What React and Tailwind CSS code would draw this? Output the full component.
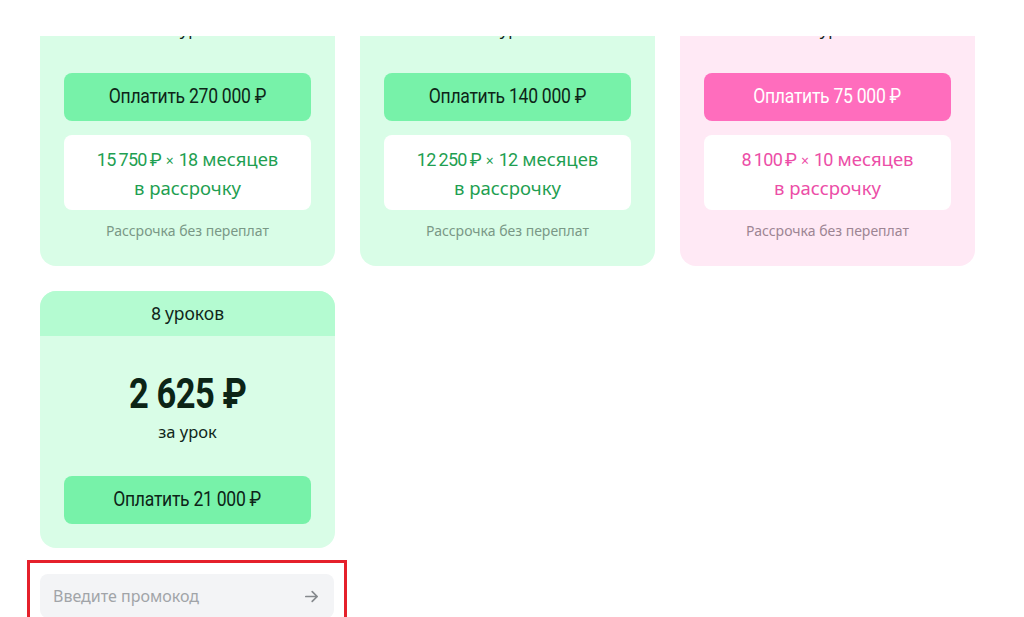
import React from "react";

const cond = { fontFamily: 'Roboto, "Liberation Sans", sans-serif' };

function N({ children }) {
  return <span className="text-[18px] tracking-[-0.7px]" style={cond}>{children}</span>;
}

function Pay({ children, white }) {
  return (
    <span className={`inline-block scale-x-[0.9] text-[19.5px] font-normal tracking-[-0.3px] ${white ? "text-white" : "text-[#0d2417]"}`} style={cond}>
      {children}
    </span>
  );
}

function Price({ children }) {
  return (
    <div className="pt-[36px] h-[80px] flex justify-center">
      <span className="inline-block scale-x-[0.82] text-[42px] leading-[44px] font-bold text-[#0c2416] tracking-[-0.5px]" style={cond}>{children}</span>
    </div>
  );
}

function TopCard({ pink, price, per, pay, a, b, c }) {
  const bg = pink ? "bg-[#ffe9f5]" : "bg-[#d9fde7]";
  const head = pink ? "bg-[#ffd3ea]" : "bg-[#b4fbd1]";
  const btn = pink ? "bg-[#ff6dbd]" : "bg-[#77f2a9]";
  const inst = pink ? "text-[#ec4ea7]" : "text-[#1f9f52]";
  const note = pink ? "text-[#9d8593]" : "text-[#7a9886]";
  return (
    <div className={`${bg} rounded-[16px] overflow-hidden flex flex-col`}>
      <div className={`${head} h-[45px] flex items-center justify-center text-[17.5px] text-[#10261a]`}>{per}</div>
      <div className="px-[24px] pb-[25px] flex flex-col items-center">
        <Price>{price}</Price>
        <div className="mt-[6px] text-[16.5px] leading-[20px] text-[#10261a]">за урок</div>
        <div className={`mt-[34px] w-full h-[48px] rounded-[8px] ${btn} flex items-center justify-center`}>
          <Pay white={pink}>{pay}</Pay>
        </div>
        <div className={`mt-[14px] w-full h-[75px] rounded-[8px] bg-white flex flex-col items-center justify-center text-[18.5px] leading-[27px] ${inst}`}>
          <div><N>{a}</N> <span className="text-[14px]">×</span> <N>{b}</N> {c}</div>
          <div>в рассрочку</div>
        </div>
        <div className={`mt-[11px] text-[14px] leading-[20px] ${note}`}>Рассрочка без переплат</div>
      </div>
    </div>
  );
}

function SmallCard() {
  return (
    <div className="bg-[#d9fde7] rounded-[16px] overflow-hidden flex flex-col self-start">
      <div className="bg-[#b4fbd1] h-[45px] flex items-center justify-center text-[17.5px] text-[#10261a]"><span><N>8</N> уроков</span></div>
      <div className="px-[24px] pb-[24px] flex flex-col items-center">
        <Price>2 625 ₽</Price>
        <div className="mt-[6px] text-[16.5px] leading-[20px] text-[#10261a]">за урок</div>
        <div className="mt-[34px] w-full h-[48px] rounded-[8px] bg-[#77f2a9] flex items-center justify-center">
          <Pay>Оплатить 21 000 ₽</Pay>
        </div>
      </div>
    </div>
  );
}

export default function App() {
  return (
    <div className="relative w-[1024px] h-[617px] overflow-hidden bg-white" style={{ fontFamily: '"Noto Sans", "Open Sans", sans-serif' }}>
      <div className="-mt-[112px]">
        <div className="grid grid-cols-[295px_295px_295px] gap-[25px] pl-[40px]">
          <TopCard price="3 750 ₽" per="72 урока" pay="Оплатить 270 000 ₽" a={"15\u2009750\u2009₽"} b="18" c="месяцев" />
          <TopCard price="3 890 ₽" per="36 уроков" pay="Оплатить 140 000 ₽" a={"12\u2009250\u2009₽"} b="12" c="месяцев" />
          <TopCard pink price="4 690 ₽" per="16 уроков" pay="Оплатить 75 000 ₽" a={"8\u2009100\u2009₽"} b="10" c="месяцев" />
          <SmallCard />
        </div>
        <div className="mt-[12px] ml-[27px] w-[320px] border-[3px] border-b-0 border-[#e5202b] pt-[11px] px-[10px] h-[60px]">
          <div className="h-[44px] rounded-[8px] bg-[#f3f4f6] flex items-center justify-between pl-[13px] pr-[14px]">
            <span className="text-[16px] text-[#a1a4a8]">Введите промокод</span>
            <svg width="17" height="17" viewBox="0 0 24 24" fill="none" stroke="#85898d" strokeWidth="2.4" strokeLinecap="round" strokeLinejoin="round">
              <path d="M4 12h16M13 5l7 7-7 7" />
            </svg>
          </div>
        </div>
      </div>
      <div className="absolute top-0 left-0 w-full h-[36px] bg-white" />
    </div>
  );
}
